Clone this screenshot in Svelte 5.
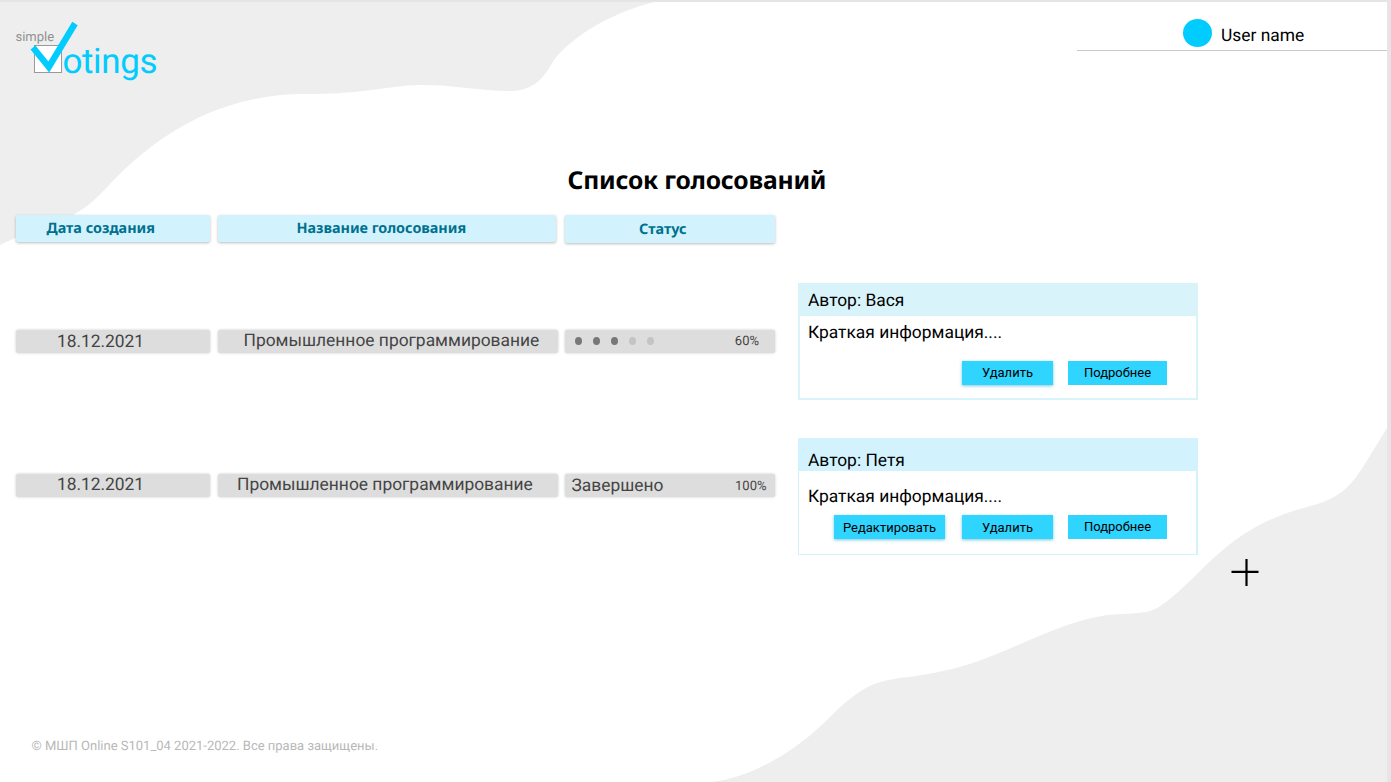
<script>
  const rows = [
    { date: '18.12.2021', name: 'Промышленное программирование', done: 3, percent: '60%' },
    { date: '18.12.2021', name: 'Промышленное программирование', status: 'Завершено', percent: '100%' }
  ];
  const cards = [
    { author: 'Вася', info: 'Краткая информация....', editable: false },
    { author: 'Петя', info: 'Краткая информация....', editable: true }
  ];
</script>

<div class="page">
  <svg class="waves" viewBox="0 0 1391 782" aria-hidden="true">
    <path d="M0 0H664C620 8 574 34 554 60C543 79 534 92 505 91C470 90 440 82 402 86C365 91 345 94 305 94C210 94 148 144 110 184C94 201 86 208 73 215C48 226 15 237 0 245Z" />
    <path d="M1387 428L1363 467C1350 487 1339 498 1314 505C1274 516 1245 526 1200 571C1177 594 1161 608 1150 611C1138 614 1131 613 1107 615C1060 622 1020 647 973 663C922 679 900 675 874 684C857 691 842 705 828 719C790 757 746 778 712 782H1387Z" />
  </svg>

  <header>
    <div class="logo">
      <span class="simple">simple</span>
      <svg class="check" width="50" height="54" viewBox="0 0 50 54">
        <rect x="6.500" y="25.500" width="27" height="27" fill="#fff" stroke="#999" />
        <path d="M5 27.500L20.800 47L47 3.500" fill="none" stroke="#00ccff" stroke-width="6.300" />
      </svg>
      <span class="otings">otings</span>
    </div>
    <div class="user">
      <span class="avatar"></span>
      <span class="username">User name</span>
    </div>
  </header>

  <h1>Список голосований</h1>

  <main>
    <section class="table">
      <div class="row head">
        <div class="cell">Дата создания</div>
        <div class="cell">Название голосования</div>
        <div class="cell">Статус</div>
      </div>
      {#each rows as row}
        <div class="row data" class:finished={row.status}>
          <div class="cell date">{row.date}</div>
          <div class="cell name">{row.name}</div>
          <div class="cell status">
            {#if row.status}
              <span class="state">{row.status}</span>
            {:else}
              <span class="dots">
                {#each [0, 1, 2, 3, 4] as i}<i class:on={i < row.done}></i>{/each}
              </span>
            {/if}
            <span class="percent">{row.percent}</span>
          </div>
        </div>
      {/each}
    </section>

    <section class="cards">
      {#each cards as card}
        <article class:own={card.editable}>
          <div class="author">Автор: {card.author}</div>
          <div class="info">{card.info}</div>
          <div class="actions">
            {#if card.editable}<button class="edit">Редактировать</button>{/if}
            <button class="remove">Удалить</button>
            <button class="more">Подробнее</button>
          </div>
        </article>
      {/each}
    </section>

    <button class="add" aria-label="Добавить">
      <svg width="28" height="28" viewBox="0 0 28 28"><path d="M0.500 12.800H27.500M15.500 0V27" stroke="#000" stroke-width="2.200" /></svg>
    </button>
  </main>

  <footer>© МШП Online S101_04 2021-2022. Все права защищены.</footer>
</div>

<style>
  :global(body) { margin: 0; overflow: hidden; }
  * { box-sizing: border-box; }
  .page {
    position: relative;
    isolation: isolate;
    display: flex;
    flex-direction: column;
    width: 1391px;
    height: 782px;
    border-top: 2px solid #e5e5e5;
    border-right: 4px solid #e5e5e5;
    background: #fff;
    font-family: Roboto, sans-serif;
    color: #000;
    white-space: nowrap;
    overflow: hidden;
    text-rendering: geometricPrecision;
  }
  .waves { position: absolute; left: 0; top: -2px; width: 1391px; height: 782px; z-index: -1; fill: #eee; }
  header { display: flex; justify-content: space-between; align-items: flex-start; height: 160px; }
  .logo { display: flex; align-items: flex-start; padding: 18px 0 0 15.500px; }
  .simple { width: 12.500px; padding-top: 10px; font-size: 13px; line-height: 16px; color: #919191; }
  .check { position: relative; z-index: 1; }
  .otings { margin-left: -15.500px; padding-top: 21px; font-size: 35px; letter-spacing: -0.400px; line-height: 42px; color: #00ccff; }
  .user { display: flex; align-items: center; width: 310px; height: 49px; padding: 14px 0 0 106px; border-bottom: 1.500px solid #c8c8c8; }
  .avatar { width: 29px; height: 28px; border-radius: 50%; background: #00ccff; margin-top: 0; }
  .username { margin: 5px 0 0 9px; font-size: 17.400px; line-height: 22px; }
  h1 { height: 52px; margin: 0; padding-left: 567.500px; font: 700 24.700px/37px "Noto Sans", sans-serif; letter-spacing: -0.220px; }
  main { display: flex; height: 396px; align-items: flex-start; }
  .table { width: 798px; padding: 1px 0 0 16px; }
  .row { display: grid; grid-template-columns: 194px 340px 210px; column-gap: 7.500px; }
  .cell { box-shadow: 0 0 3px #0003; border-radius: 2px; }
  .head { height: 28px; margin-bottom: 87px; font: 700 14.400px/28px "Noto Sans", sans-serif; color: #00708f; }
  .head .cell { height: 27px; background: #d2f3fd; box-shadow: 0 1px 3px #0004; }
  .head .cell:nth-child(1) { padding-left: 30.500px; }
  .head .cell:nth-child(2) { width: 338px; padding-left: 79px; letter-spacing: -0.040px; }
  .head .cell:nth-child(3) { height: 28px; padding-left: 74px; line-height: 29px; }
  .data { height: 23px; margin-bottom: 121px; font-size: 17.400px; line-height: 25px; color: #444; }
  .data .cell { height: 22.500px; background: #ddd; }
  .date { padding-left: 41px; letter-spacing: -0.050px; }
  .name { padding-left: 26px; line-height: 23px; }
  .finished .date { line-height: 23px; }
  .finished .name { padding-left: 19.500px; }
  .status { display: flex; justify-content: space-between; padding: 0 16px 0 10px; }
  .finished .status { padding: 0 8.500px 0 6.500px; }
  .dots { display: flex; align-items: center; gap: 11px; }
  .dots i { width: 7px; height: 8px; border-radius: 50%; background: #c4c4c4; }
  .dots i.on { background: #777; }
  .percent { font-size: 13px; line-height: 23px; }
  .finished .percent { line-height: 25px; }
  .cards { width: 400px; padding-top: 69px; }
  article { height: 117px; margin-bottom: 38px; background: #fff; border: 2px solid #d9f3fb; border-top: 0; }
  .author { height: 33px; padding-left: 8px; font-size: 17.400px; line-height: 37px; background: #d9f3fb; }
  .info { height: 45px; padding-left: 8px; font-size: 17.400px; line-height: 35px; }
  .own { border-color: #d2f3fd; border-width: 0 2px 1px 1px; }
  .own .author { padding: 5px 0 0 9px; background: #d2f3fd; }
  .own .info { height: 44px; padding: 9px 0 0 9px; }
  .actions { display: flex; justify-content: flex-end; gap: 15px; padding-right: 29px; }
  button { height: 24px; margin: 0; padding: 0; border: 0; background: #2fd4ff; font: 13px/24px Roboto, sans-serif; color: #000; }
  .edit { width: 111px; margin-right: 2px; }
  .remove { width: 91px; }
  .more { width: 99px; }
  .edit, .remove { box-shadow: 0 1px 3px #0098bd88; }
  .own .edit, .own .remove { padding-top: 1px; }
  .own .more { padding-bottom: 2px; }
  .add { width: 28px; height: 28px; margin: 345px 0 0 33px; background: none; }
  .add svg { display: block; }
  footer { padding: 129px 0 0 31.500px; font-size: 13px; line-height: 15px; color: #b8b8b8; }
</style>
